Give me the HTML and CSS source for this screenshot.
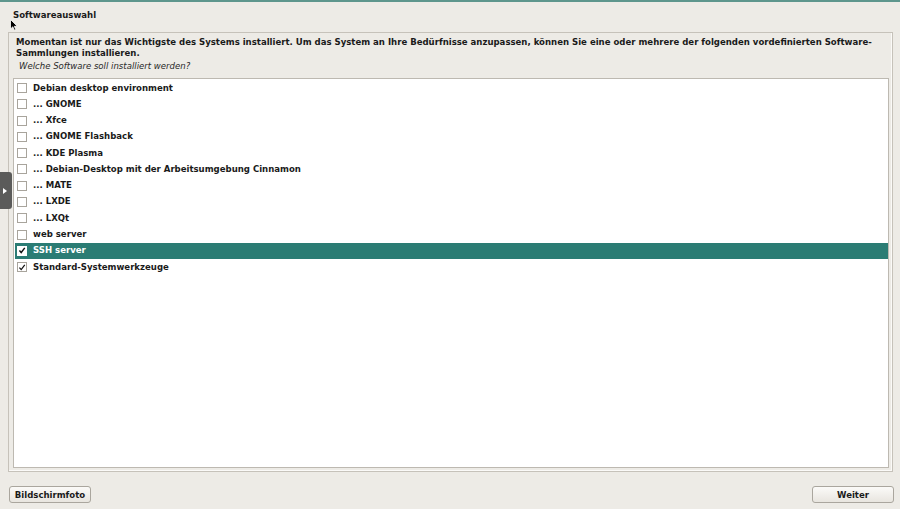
FILE: index.html
```html
<!DOCTYPE html>
<html lang="de">
<head>
<meta charset="utf-8">
<title>Softwareauswahl</title>
<link rel="stylesheet" href="styles.css">
</head>
<body>
<div class="topline"></div>
<div class="title">Softwareauswahl</div>
<div class="panel">
  <p class="desc">Momentan ist nur das Wichtigste des Systems installiert. Um das System an Ihre Bedürfnisse anzupassen, können Sie eine oder mehrere der folgenden vordefinierten Software-Sammlungen installieren.</p>
  <p class="question">Welche Software soll installiert werden?</p>
  <div class="list">
    <div class="row"><span class="box"></span><span class="label">Debian desktop environment</span></div>
    <div class="row"><span class="box"></span><span class="label">... GNOME</span></div>
    <div class="row"><span class="box"></span><span class="label">... Xfce</span></div>
    <div class="row"><span class="box"></span><span class="label">... GNOME Flashback</span></div>
    <div class="row"><span class="box"></span><span class="label">... KDE Plasma</span></div>
    <div class="row"><span class="box"></span><span class="label">... Debian-Desktop mit der Arbeitsumgebung Cinnamon</span></div>
    <div class="row"><span class="box"></span><span class="label">... MATE</span></div>
    <div class="row"><span class="box"></span><span class="label">... LXDE</span></div>
    <div class="row"><span class="box"></span><span class="label">... LXQt</span></div>
    <div class="row"><span class="box"></span><span class="label">web server</span></div>
    <div class="row selected"><span class="box checked"><svg viewBox="0 0 9 9" width="9" height="9"><path d="M1.6 4.6 L3.6 6.8 L7.6 1.6" fill="none" stroke="#111" stroke-width="1.6"/></svg></span><span class="label">SSH server</span></div>
    <div class="row"><span class="box checked"><svg viewBox="0 0 9 9" width="9" height="9"><path d="M1.6 4.6 L3.6 6.8 L7.6 1.6" fill="none" stroke="#111" stroke-width="1.4"/></svg></span><span class="label">Standard-Systemwerkzeuge</span></div>
  </div>
</div>
<div class="footer">
  <button class="btn">Bildschirmfoto</button>
  <button class="btn">Weiter</button>
</div>
<div class="sidetab"><svg viewBox="0 0 4 6" width="4" height="6"><path d="M0 0 L4 3 L0 6 Z" fill="#fff"/></svg></div>
<svg class="cursor" viewBox="0 0 8 12" width="8" height="12"><path d="M0.5 0.5 L0.5 10 L2.8 7.8 L4.4 11.2 L5.8 10.6 L4.3 7.3 L7.3 7.3 Z" fill="#000" stroke="#fff" stroke-width="0.8"/></svg>
</body>
</html>
```
FILE: styles.css
```css
html, body {
  margin: 0;
  padding: 0;
}
body {
  width: 900px;
  height: 509px;
  overflow: hidden;
  background: #edebe6;
  font-family: "DejaVu Sans", "Liberation Sans", sans-serif;
  font-size: 8.55px;
  line-height: 11px;
  color: #1a1a1a;
  position: relative;
}
.topline {
  height: 2px;
  background: #5e968d;
}
.title {
  font-weight: bold;
  margin: 8px 0 11px 13px;
}
.panel {
  margin: 0 7px 0 8px;
  height: 435px;
  border: 1px solid #c6c2ba;
  box-shadow: inset -1px -1px 0 #fbfaf8;
  padding: 3px 0 0 0;
  box-sizing: content-box;
  display: flex;
  flex-direction: column;
}
.desc {
  margin: 1px 12px 0 7px;
  font-weight: bold;
}
.question {
  margin: 2px 0 6px 10px;
  font-style: italic;
  color: #2a2a2a;
}
.list {
  margin: 0 3px 3px 4px;
  flex: 1;
  background: #fff;
  border: 1px solid #bdb9b1;
  padding-top: 1px;
}
.row {
  height: 16.27px;
  display: flex;
  align-items: center;
  font-weight: bold;
}
.box {
  width: 8px;
  height: 8px;
  margin-left: 3px;
  margin-right: 6px;
  border: 1px solid #a8a49c;
  background: #fff;
  display: flex;
  align-items: center;
  justify-content: center;
  flex-shrink: 0;
}
.box svg {
  display: block;
}
.row.selected {
  background: #2b7c74;
  color: #fff;
  margin-left: 1px;
}
.row.selected .box {
  margin-left: 2px;
  border-color: #fff;
}
.footer {
  display: flex;
  justify-content: space-between;
  margin: 14px 6px 0 9px;
}
.btn {
  width: 82px;
  height: 17px;
  padding: 0;
  font-family: "DejaVu Sans", "Liberation Sans", sans-serif;
  font-size: 8.55px;
  font-weight: bold;
  color: #1a1a1a;
  border: 1px solid #aaa69e;
  border-radius: 3px;
  background: linear-gradient(#fbfaf8, #e8e5df);
}
.sidetab {
  position: absolute;
  left: 0;
  top: 172px;
  width: 12px;
  height: 37px;
  background: #5b5b5a;
  border-radius: 0 3px 3px 0;
  display: flex;
  align-items: center;
  padding-left: 3px;
  box-sizing: border-box;
}
.sidetab svg {
  display: block;
}
.cursor {
  position: absolute;
  left: 10px;
  top: 19px;
}
```
